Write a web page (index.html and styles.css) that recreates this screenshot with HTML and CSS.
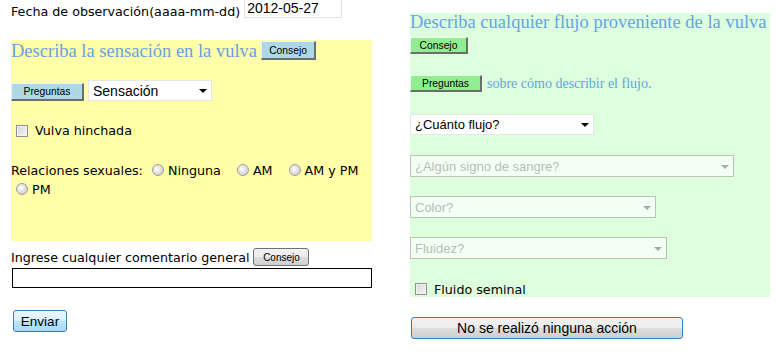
FILE: index.html
```html
<!DOCTYPE html>
<html lang="es">
<head>
  <meta charset="UTF-8">
  <title>Observación</title>
  <link rel="stylesheet" href="styles.css">
</head>
<body>
  <div class="page">
    <div class="col-left">
      <div class="fecha">
        <label>Fecha de observación(aaaa-mm-dd)</label>
        <input type="text" class="date" value="2012-05-27">
      </div>

      <div class="panel yellow">
        <div class="title-row">
          <span class="title">Describa la sensación en la vulva</span>
          <button class="btn blue consejo">Consejo</button>
        </div>
        <div class="q-row">
          <button class="btn blue preguntas">Preguntas</button>
          <span class="sel"><select class="sensacion"><option>Sensación</option></select></span>
        </div>
        <div class="check-row">
          <input type="checkbox"> <span>Vulva hinchada</span>
        </div>
        <div class="radio-row">
          <span class="lbl">Relaciones sexuales:</span>
          <span class="opt"><input type="radio" name="rel">Ninguna</span>
          <span class="opt"><input type="radio" name="rel">AM</span>
          <span class="opt"><input type="radio" name="rel">AM y PM</span>
          <span class="opt"><input type="radio" name="rel">PM</span>
        </div>
      </div>

      <div class="comment-row">
        <span>Ingrese cualquier comentario general</span>
        <button class="btn grey">Consejo</button>
      </div>
      <input type="text" class="comment">

      <button class="send">Enviar</button>
    </div>

    <div class="col-right">
      <div class="panel green">
        <div class="title">Describa cualquier flujo proveniente de la vulva</div>
        <button class="btn greenbtn consejo2">Consejo</button>
        <div class="q-row2">
          <button class="btn greenbtn preguntas2">Preguntas</button>
          <span class="hint">sobre cómo describir el flujo.</span>
        </div>
        <div class="sel-row"><span class="sel"><select class="s1"><option>¿Cuánto flujo?</option></select></span></div>
        <div class="sel-row"><span class="sel off"><select class="s2" disabled><option>¿Algún signo de sangre?</option></select></span></div>
        <div class="sel-row"><span class="sel off"><select class="s3" disabled><option>Color?</option></select></span></div>
        <div class="sel-row"><span class="sel off"><select class="s4" disabled><option>Fluidez?</option></select></span></div>
        <div class="check-row2">
          <input type="checkbox"> <span>Fluido seminal</span>
        </div>
      </div>
      <button class="none-btn">No se realizó ninguna acción</button>
    </div>
  </div>
</body>
</html>
```

FILE: styles.css
```css
body {
  margin: 0;
  font-family: "DejaVu Sans", Verdana, sans-serif;
  font-size: 12.7px;
  color: #000;
}

.page {
  display: flex;
  padding-left: 11px;
}

.col-left {
  width: 361px;
}

.col-right {
  width: 360px;
  margin-left: 38px;
  margin-top: 13px;
}

/* fecha */
.fecha {
  display: flex;
  align-items: flex-start;
  height: 19px;
}

.fecha label {
  margin-top: 4px;
}

.date {
  width: 98px;
  height: 21px;
  margin: -3px 0 0 4px;
  padding: 0 2px;
  border: 1px solid #e2e2e2;
  font-family: "Liberation Sans", Arial, sans-serif;
  font-size: 14px;
  box-sizing: border-box;
}

/* panels */
.panel.yellow {
  background-color: #ffffaa;
  height: 201px;
  margin-top: 21px;
}

.panel.green {
  background-color: #ddffdd;
  height: 284px;
}

.title {
  font-family: "Liberation Serif", "Times New Roman", serif;
  font-size: 18.5px;
  color: #66a3e0;
  line-height: 18px;
}

.title-row {
  display: flex;
  align-items: center;
  height: 21px;
}

.title-row .title {
  margin-right: 4px;
}

/* buttons */
.btn {
  font-family: "Liberation Sans", Arial, sans-serif;
  font-size: 10.3px;
  padding: 0;
  color: #000;
  box-sizing: border-box;
  cursor: pointer;
}

.btn.blue,
.btn.greenbtn {
  border-style: solid;
  border-width: 1px 2px 2px 1px;
  border-color: #eef6f9 #6d6d6d #6d6d6d #eef6f9;
}

.btn.blue {
  background-color: #add8e6;
}

.btn.greenbtn {
  background-color: #90ee90;
  border-color: #f0fdf0 #6d6d6d #6d6d6d #f0fdf0;
}

.consejo {
  width: 55px;
  height: 19px;
}

.preguntas {
  width: 73px;
  height: 18px;
}

.consejo2 {
  display: block;
  width: 58px;
  height: 17px;
  margin-top: 6px;
}

.preguntas2 {
  width: 72px;
  height: 17px;
}

.btn.grey {
  width: 56px;
  height: 18px;
  border: 1px solid #707070;
  border-radius: 3px;
  background: linear-gradient(#f2f2f2, #ebebeb 50%, #dddddd 50%, #cfcfcf);
  font-size: 10px;
  margin-left: 4px;
}

/* selects */
.sel {
  position: relative;
  display: inline-block;
}

.sel select {
  appearance: none;
  -webkit-appearance: none;
  display: block;
  background-color: #fff;
  border: 1px solid #e6e6e6;
  border-radius: 0;
  height: 21px;
  padding: 0 0 0 4px;
  font-family: "Liberation Sans", Arial, sans-serif;
  font-size: 13px;
  color: #000;
  box-sizing: border-box;
}

.sel::after {
  content: "";
  position: absolute;
  right: 5px;
  top: 9px;
  border-left: 4px solid transparent;
  border-right: 4px solid transparent;
  border-top: 4px solid #000;
  pointer-events: none;
}

.sel.off select {
  border-color: #ababab;
  color: #a3a3a3;
  height: 22px;
}

.sel.off::after {
  border-top-color: #a9a9a9;
  top: 10px;
}

.sensacion {
  width: 124px;
  font-size: 14px !important;
}

.s1 { width: 184px; }
.s2 { width: 324px; }
.s3 { width: 246px; }
.s4 { width: 257px; }

.q-row {
  display: flex;
  align-items: flex-end;
  gap: 4px;
  margin-top: 19px;
}

.q-row2 {
  display: flex;
  align-items: center;
  gap: 5px;
  margin-top: 21px;
}

.hint {
  font-family: "Liberation Serif", "Times New Roman", serif;
  font-size: 14px;
  color: #66a3e0;
}

.sel-row {
  margin-top: 20px;
  height: 21px;
}

.q-row2 + .sel-row {
  margin-top: 22px;
}

/* checkboxes and radios */
input[type="checkbox"] {
  appearance: none;
  -webkit-appearance: none;
  width: 12px;
  height: 12px;
  margin: 0 7px 0 5px;
  border: 1px solid #8e8f8f;
  background: linear-gradient(135deg, #d6d6d6, #f6f6f6);
  box-shadow: inset 0 0 0 1px #f2f2f2;
  box-sizing: border-box;
}

input[type="radio"] {
  appearance: none;
  -webkit-appearance: none;
  width: 12px;
  height: 12px;
  margin: 0 4px 0 5px;
  border: 1px solid #a0a0a0;
  border-radius: 50%;
  background: radial-gradient(circle at 40% 40%, #ffffff, #d2d2d2 70%, #bdbdbd);
  box-sizing: border-box;
  vertical-align: -1px;
}

.check-row,
.check-row2 {
  display: flex;
  align-items: center;
  height: 19px;
}

.check-row {
  margin-top: 20px;
}

.check-row2 {
  margin-top: 22px;
  height: 18px;
}

.radio-row {
  margin-top: 21px;
  line-height: 19px;
}

.radio-row .opt {
  margin-right: 7px;
  white-space: nowrap;
}

/* comment */
.comment-row {
  display: flex;
  align-items: center;
  height: 18px;
  margin-top: 7px;
}

.comment {
  display: block;
  width: 360px;
  height: 20px;
  margin: 2px 0 0 1px;
  border: 1px solid #000;
  box-sizing: border-box;
}

.send {
  display: block;
  width: 54px;
  height: 22px;
  margin: 22px 0 0 2px;
  padding: 0;
  border: 1px solid #3c7fb1;
  border-radius: 3px;
  background: linear-gradient(#eaf6fd, #d9f0fc 50%, #bee6fd 50%, #a7d9f5);
  font-family: "Liberation Sans", Arial, sans-serif;
  font-size: 13.5px;
  color: #000;
}

.none-btn {
  display: block;
  width: 272px;
  height: 22px;
  margin: 20px 0 0 1px;
  padding: 0;
  border: 1px solid #3c7fb1;
  border-radius: 3px;
  background: linear-gradient(#f2f2f2, #ebebeb 50%, #dddddd 50%, #cfcfcf);
  font-family: "Liberation Sans", Arial, sans-serif;
  font-size: 14px;
  color: #000;
}
```
